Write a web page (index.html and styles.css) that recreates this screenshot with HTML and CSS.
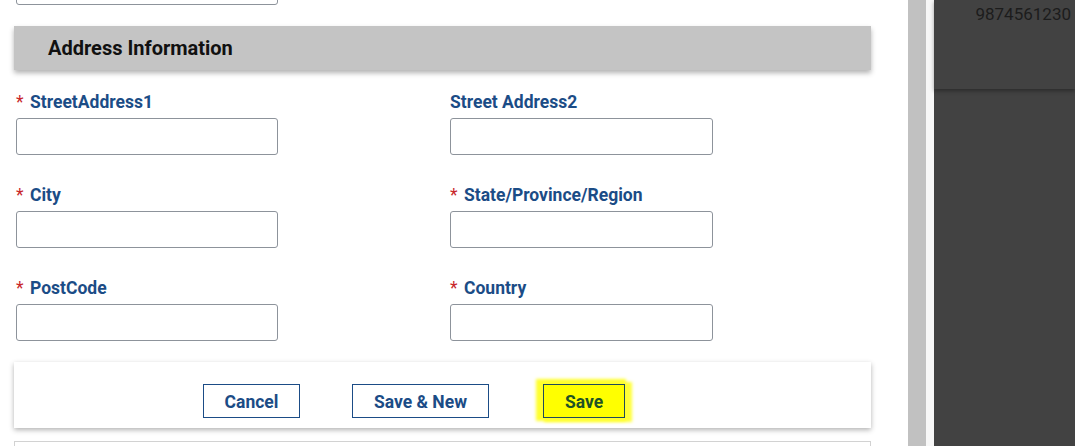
FILE: index.html
```html
<!DOCTYPE html>
<html lang="en">
<head>
    <meta charset="UTF-8">
    <meta name="viewport" content="width=device-width, initial-scale=1.0">
    <title>Address Information</title>
    <link rel="stylesheet" href="styles.css">
</head>
<body>
    <div class="page">
        <div class="main">
            <div class="prev-field">
                <input type="text" class="text-input">
            </div>

            <div class="section-header">Address Information</div>

            <div class="form-grid">
                <div class="field">
                    <label><span class="req">*</span>StreetAddress1</label>
                    <input type="text" class="text-input">
                </div>
                <div class="field">
                    <label>Street Address2</label>
                    <input type="text" class="text-input wide">
                </div>
                <div class="field">
                    <label><span class="req">*</span>City</label>
                    <input type="text" class="text-input">
                </div>
                <div class="field">
                    <label><span class="req">*</span>State/Province/Region</label>
                    <input type="text" class="text-input wide">
                </div>
                <div class="field">
                    <label><span class="req">*</span>PostCode</label>
                    <input type="text" class="text-input">
                </div>
                <div class="field">
                    <label><span class="req">*</span>Country</label>
                    <input type="text" class="text-input wide">
                </div>
            </div>

            <div class="button-bar">
                <button class="btn btn-cancel">Cancel</button>
                <button class="btn btn-new">Save &amp; New</button>
                <button class="btn btn-save">Save</button>
            </div>

            <div class="next-box"></div>
        </div>

        <div class="scrollbar"></div>

        <div class="side-panel">
            <div class="side-top">9874561230</div>
        </div>
    </div>
</body>
</html>
```

FILE: styles.css
```css
body { margin: 0; font-family: Roboto, "Liberation Sans", Arial, sans-serif; background: #fff; overflow: hidden; }
.page { display: flex; height: 446px; }

.main { width: 857px; padding-left: 14px; padding-right: 37px; overflow: hidden; }
.prev-field { margin-top: -32px; padding-left: 2px; }

.text-input { box-sizing: border-box; width: 262px; height: 37px; border: 1px solid #8d939b; border-radius: 3px; background: #fff; display: block; }
.text-input.wide { width: 263px; }

.section-header { margin-top: 21px; height: 44px; background: #c4c4c4; box-shadow: 0 3px 5px rgba(0, 0, 0, 0.3); padding-left: 34px; font-size: 20px; font-weight: 700; line-height: 44px; color: #111; }

.form-grid { display: grid; grid-template-columns: 434px 1fr; padding-left: 2px; padding-top: 21px; row-gap: 29px; }
.field label { display: block; font-size: 17.5px; font-weight: 700; color: #1b4c86; line-height: 19px; padding-top: 2px; margin-bottom: 6px; }
.req { display: inline-block; width: 14px; color: #c8262b; font-weight: 400; }

.button-bar { margin-top: 21px; height: 66px; box-sizing: border-box; padding: 22px 0 0 189px; background: #fff; box-shadow: 0 2px 5px rgba(0, 0, 0, 0.3); display: flex; }
.btn { height: 34px; padding: 2px 0 0; border: 1px solid #1b4c86; background: #fff; color: #1b4c86; font-family: Roboto, "Liberation Sans", Arial, sans-serif; font-size: 17.5px; font-weight: 700; cursor: pointer; }
.btn-cancel { width: 97px; }
.btn-new { width: 137px; margin-left: 52px; }
.btn-save { width: 82px; margin-left: 54px; background: #ffff00; color: #1f5326; border-color: #1f4a5a; box-shadow: -3px -1px 3px 4px #ffff2e, 4px 1px 3px 3px #ffff3a; }

.next-box { margin-top: 13px; height: 40px; border: 1px solid #d2d2d2; }

.scrollbar { width: 18px; background: #c1c1c1; border-right: 8px solid #f7f7f7; flex-shrink: 0; }

.side-panel { flex: 1; background: #424242; }
.side-top { height: 89px; padding: 4px 4px 0 0; box-sizing: border-box; text-align: right; font-size: 17px; color: #1c1c1c; box-shadow: 0 2px 4px rgba(0, 0, 0, 0.35); }
```
